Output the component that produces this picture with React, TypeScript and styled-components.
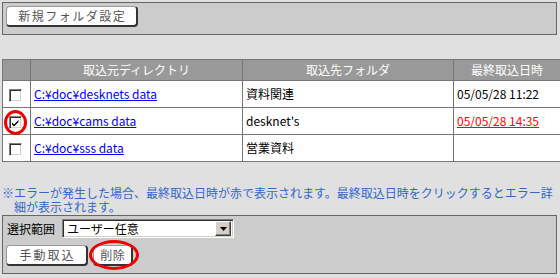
import React from "react";
import styled, { createGlobalStyle } from "styled-components";

const Global = createGlobalStyle`
  html, body { margin: 0; padding: 0; background: #e0e0e0; }
  body { font-family: "Noto Sans CJK JP", "Noto Sans", sans-serif; font-size: 12px; color: #000; }
`;

const Page = styled.div`
  padding: 2px;
  width: 555px;
  display: flex;
  flex-direction: column;
`;

const Panel = styled.div<{ $pad: string }>`
  background: #cccccc;
  border: 1px solid #666;
  padding: ${(p) => p.$pad};
  display: flex;
  flex-direction: column;
  gap: 7px;
`;

const Button = styled.button<{ $w: number; $ls: number }>`
  width: ${(p) => p.$w}px;
  height: 21px;
  box-sizing: border-box;
  background: #fff;
  border: 1px solid #999;
  border-right: 2px solid #333;
  border-bottom: 2px solid #333;
  border-radius: 4px;
  font-family: "Noto Sans CJK JP", sans-serif;
  font-size: 12px;
  line-height: 16px;
  color: #555;
  letter-spacing: ${(p) => p.$ls}px;
  padding: 0 0 0 ${(p) => p.$ls}px;
  cursor: pointer;
`;

const Table = styled.table`
  margin-top: 24px;
  border-collapse: collapse;
  width: 555px;
  border: 1px solid #666;
  table-layout: fixed;
`;

const Th = styled.th<{ $w: number }>`
  width: ${(p) => p.$w}px;
  height: 20px;
  background: #999;
  color: #fff;
  font-weight: normal;
  font-size: 12px;
  line-height: 14px;
  border: 1px solid #777;
  padding: 0;
  text-align: center;
`;

const Td = styled.td<{ $center?: boolean }>`
  height: 26px;
  background: #fff;
  border: 1px solid #777;
  padding: 0 0 0 3px;
  font-size: 12px;
  line-height: 14px;
  text-align: ${(p) => (p.$center ? "center" : "left")};
  white-space: nowrap;
`;

const Link = styled.a<{ $error?: boolean }>`
  color: ${(p) => (p.$error ? "#ff0000" : "#0000ff")};
  text-decoration: underline;
`;

const CheckWrap = styled.span`
  position: relative;
  display: inline-block;
  width: 13px;
  height: 13px;
  vertical-align: middle;
  margin-left: 6px;
`;

const CheckBox = styled.span`
  display: block;
  box-sizing: border-box;
  width: 13px;
  height: 13px;
  background: #fff;
  border: 1px solid;
  border-color: #808080 #ffffff #ffffff #808080;
  box-shadow: inset 1px 1px #303030, inset -1px -1px #d4d0c8;
`;

const Ring = styled.span<{ $l: number; $t: number; $w: number; $h: number }>`
  position: absolute;
  left: ${(p) => p.$l}px;
  top: ${(p) => p.$t}px;
  width: ${(p) => p.$w}px;
  height: ${(p) => p.$h}px;
  box-sizing: border-box;
  border: 3px solid #ee0000;
  border-radius: 50%;
  pointer-events: none;
`;

const Note = styled.p`
  margin: 24px 0 1px 0;
  padding-left: 12px;
  text-indent: -12px;
  color: #3366cc;
  font-size: 12px;
  line-height: 14px;
`;

const Row = styled.div`
  display: flex;
  align-items: center;
  gap: 7px;
`;

const Label = styled.span`
  margin-left: 1px;
  font-size: 12px;
  line-height: 14px;
`;

const SelectBox = styled.div`
  width: 172px;
  height: 19px;
  box-sizing: border-box;
  background: #fff;
  border: 1px solid;
  border-color: #808080 #ffffff #ffffff #808080;
  box-shadow: inset 1px 1px #303030, inset -1px -1px #d4d0c8;
  display: flex;
  align-items: center;
  justify-content: space-between;
  padding: 2px;
  font-size: 12px;
  line-height: 14px;
`;

const SelectText = styled.span`
  padding-left: 2px;
`;

const ArrowBtn = styled.span`
  width: 16px;
  height: 15px;
  box-sizing: border-box;
  background: #d4d0c8;
  border: 1px solid;
  border-color: #ffffff #404040 #404040 #ffffff;
  box-shadow: inset -1px -1px #808080;
  display: flex;
  align-items: center;
  justify-content: center;
`;

const BtnWrap = styled.span`
  position: relative;
  display: inline-block;
`;

const Buttons = styled.div`
  display: flex;
  gap: 5px;
`;

const rows = [
  { dir: "C:¥doc¥desknets data", folder: "資料関連", date: "05/05/28 11:22", error: false, checked: false },
  { dir: "C:¥doc¥cams data", folder: "desknet's", date: "05/05/28 14:35", error: true, checked: true },
  { dir: "C:¥doc¥sss data", folder: "営業資料", date: "", error: false, checked: false },
];

export default function App() {
  return (
    <>
      <Global />
      <Page>
        <Panel $pad="3px 3px 7px 3px">
          <div>
            <Button $w={132} $ls={1.5}>新規フォルダ設定</Button>
          </div>
        </Panel>
        <Table>
          <thead>
            <tr>
              <Th $w={27}></Th>
              <Th $w={211}>取込元ディレクトリ</Th>
              <Th $w={210}>取込先フォルダ</Th>
              <Th $w={106}>最終取込日時</Th>
            </tr>
          </thead>
          <tbody>
            {rows.map((r) => (
              <tr key={r.dir}>
                <Td style={{ padding: 0 }}>
                  <CheckWrap>
                    <CheckBox>
                      {r.checked && (
                        <svg width="11" height="11" viewBox="0 0 11 11">
                          <path d="M2 4.5 L4 6.5 L8.5 2 L8.5 4 L4 8.5 L2 6.5 Z" fill="#000" />
                        </svg>
                      )}
                    </CheckBox>
                    {r.checked && <Ring $l={-5} $t={-6} $w={23} $h={25} />}
                  </CheckWrap>
                </Td>
                <Td>
                  <Link href="#">{r.dir}</Link>
                </Td>
                <Td>{r.folder}</Td>
                <Td>{r.date && (r.error ? <Link href="#" $error>{r.date}</Link> : r.date)}</Td>
              </tr>
            ))}
          </tbody>
        </Table>
        <Note>
          ※エラーが発生した場合、最終取込日時が赤で表示されます。最終取込日時をクリックするとエラー詳細が表示されます。
        </Note>
        <Panel $pad="3px 3px 7px 3px">
          <Row>
            <Label>選択範囲</Label>
            <SelectBox>
              <SelectText>ユーザー任意</SelectText>
              <ArrowBtn>
                <svg width="7" height="4" viewBox="0 0 7 4">
                  <path d="M0 0 H7 L3.5 4 Z" fill="#000" />
                </svg>
              </ArrowBtn>
            </SelectBox>
          </Row>
          <Buttons>
            <Button $w={82} $ls={2}>手動取込</Button>
            <BtnWrap>
              <Button $w={40} $ls={0.5}>削除</Button>
              <Ring $l={-4} $t={-5} $w={50} $h={30} />
            </BtnWrap>
          </Buttons>
        </Panel>
      </Page>
    </>
  );
}
